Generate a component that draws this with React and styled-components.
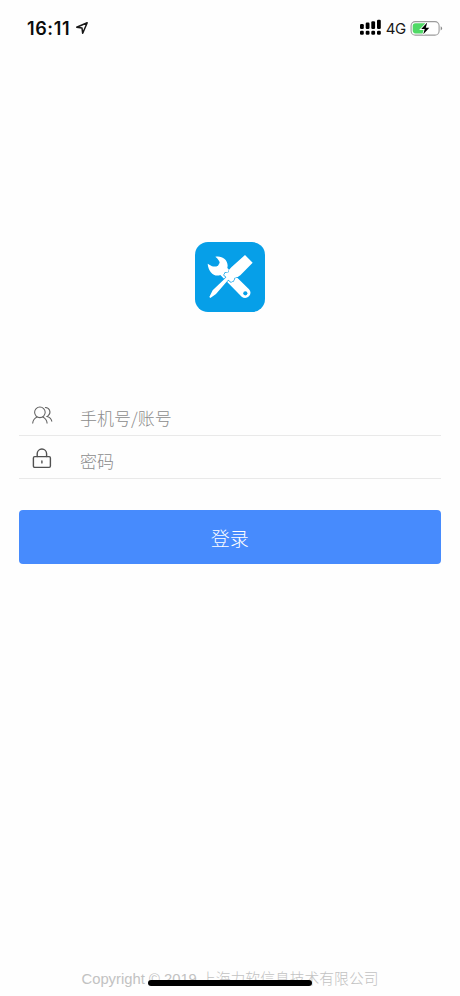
import React from "react";
import styled, { createGlobalStyle } from "styled-components";

const GlobalStyle = createGlobalStyle`
  * { box-sizing: border-box; }
  body { margin: 0; background: #fefefe; font-family: "Liberation Sans", "Noto Sans CJK SC", sans-serif; }
`;

const Screen = styled.main`
  width: 460px;
  height: 996px;
  display: flex;
  flex-direction: column;
  background: #fefefe;
  overflow: hidden;
`;

const StatusBar = styled.header`
  height: 56px;
  flex: none;
  display: flex;
  justify-content: space-between;
  padding: 0 17.5px 0 27px;
  align-items: center;
`;

const StatusGroup = styled.div`
  display: flex;
  align-items: center;
  gap: ${(p) => p.$gap}px;
`;

const Clock = styled.span`
  font: 600 18px/20px Inter, sans-serif;
  letter-spacing: 0.6px;
  padding-top: 1px;
  color: #0b0b0b;
`;

const Network = styled.span`
  font: 400 15px/20px Inter, sans-serif;
  letter-spacing: -0.3px;
  padding-top: 2px;
  color: #171717;
`;

const Icon = styled.svg`
  display: block;
  flex: none;
  overflow: visible;
`;

const Logo = styled.div`
  width: 70px;
  height: 70px;
  margin: 186px auto 0;
  border-radius: 13px;
  background: #069fe8;
  overflow: hidden;
  flex: none;
`;

const Form = styled.form`
  margin: 81px 19px 0 18.5px;
  display: flex;
  flex-direction: column;
`;

const Field = styled.label`
  height: 43px;
  display: flex;
  align-items: center;
  border-bottom: 1px solid #e9e9e9;
  padding-left: 12px;
  gap: 27.5px;
`;

const Input = styled.input`
  flex: 1;
  min-width: 0;
  height: 28px;
  margin-top: 8px;
  padding: 0;
  border: 0;
  outline: 0;
  background: transparent;
  font: 300 17px/28px "Noto Sans CJK SC", sans-serif;
  color: #333;
  &::placeholder { color: #8c8c8c; opacity: 1; }
`;

const Submit = styled.button`
  height: 54px;
  margin-top: 31.4px;
  padding: 2px 0 0;
  border: 0;
  border-radius: 4px;
  background: #478bfd;
  color: #fff;
  font: 300 19px/52px "Noto Sans CJK SC", sans-serif;
`;

const Footer = styled.footer`
  margin-top: auto;
  height: 29px;
  display: grid;
  justify-items: center;
  position: relative;
`;

const Copyright = styled.div`
  font: 300 14.8px/24px "Liberation Sans", "Noto Sans CJK SC", sans-serif;
  color: #c2c2c2;
  white-space: nowrap;
`;

const HomeIndicator = styled.div`
  position: absolute;
  top: 13px;
  left: 148px;
  width: 164px;
  height: 6px;
  border-radius: 3px;
  background: #000;
`;

const LocationIcon = () => (
  <Icon width="13" height="13" viewBox="-0.5 0.5 13 13">
    <path d="M1.2 5.7 11.7 1.2 7.2 11.8 6.5 6.5Z" fill="none" stroke="#171717" strokeWidth="1.5" strokeLinejoin="round" />
  </Icon>
);

const SignalIcon = () => (
  <Icon width="21" height="16" viewBox="0 0 21 16">
    {[0, 5.7, 11.3, 17].map((x, i) => (
      <g key={x}>
        <rect x={x} y={4 - i * 1.4} width="3.8" height={5 + i * 1.4} rx="1.2" />
        <rect x={x} y="10.8" width="3.8" height="4" rx="1.2" />
      </g>
    ))}
  </Icon>
);

const BatteryIcon = () => (
  <Icon width="32" height="15" viewBox="0.5 0 32 15">
    <rect x=".6" y=".6" width="28" height="13.5" rx="4.2" fill="#fff" stroke="#9b9b9b" strokeWidth="1.1" />
    <path d="M5 2.2h9.7v10.2H5a2.8 2.8 0 0 1-2.8-2.8V5A2.8 2.8 0 0 1 5 2.2Z" fill="#50d966" />
    <path d="M30.2 5.2q3 2.1 0 4.4Z" fill="#8c8c8c" />
    <path d="M16.7 1.6 10.7 8h3.5l-1.4 5.3 6-6.5h-3.5Z" stroke="#fff" strokeWidth="1.8" paintOrder="stroke" />
  </Icon>
);

const ToolsIcon = () => (
  <Icon width="70" height="70" viewBox="30 32 210 210">
    <path fill="#fff" d="M91 76C109 72 128 83 128 103L127 110 192 174Q201 184 192 195 181 205 170 196L106 131C87 138 70 121 68 97L81 105Q92 107 99 103L104 94Q103 86 91 76Z" />
    <circle cx="181" cy="186" r="6.2" fill="#069fe8" />
    <path fill="#fff" stroke="#069fe8" strokeWidth="4" paintOrder="stroke" strokeLinejoin="round" d="M180 71 203 94 166 132Q157 140 149 139L145 149 138 152 130 145 93 188 76 200 73 197 83 177 124 138 117 131 121 124 131 123Q131 114 139 108Z" />
  </Icon>
);

const UsersIcon = () => (
  <Icon width="22" height="22" viewBox="0 -1.5 22 22" fill="none" stroke="#626262" strokeWidth="1.05" strokeLinecap="round">
    <circle cx="8.9" cy="7.8" r="5.3" />
    <path d="M1.7 18.6c.3-3 1.8-4.9 4.3-6.1M11.8 12.5c2.5 1.2 4 3.1 4.3 6.1M14.4 3c4.5.2 6.1 5.4 2.8 8.1l-1.2.9c2.6.6 4.2 2.2 4.8 4.7" />
  </Icon>
);

const LockIcon = () => (
  <Icon width="22" height="22" viewBox="0.5 -1.2 22 22" fill="none" stroke="#515151" strokeWidth="1.4" strokeLinecap="round">
    <rect x="2.9" y="9.4" width="17" height="10.8" rx="1.3" />
    <path d="M6.7 9.4V6.5a4.7 4.7 0 0 1 9.4 0v2.9M11.4 13.7v2" />
  </Icon>
);

export default function App() {
  return (
    <Screen>
      <GlobalStyle />
      <StatusBar>
        <StatusGroup $gap={5}><Clock>16:11</Clock><LocationIcon /></StatusGroup>
        <StatusGroup $gap={4.5}><SignalIcon /><Network>4G</Network><BatteryIcon /></StatusGroup>
      </StatusBar>
      <Logo><ToolsIcon /></Logo>
      <Form>
        <Field><UsersIcon /><Input placeholder="手机号/账号" aria-label="手机号/账号" /></Field>
        <Field><LockIcon /><Input type="password" placeholder="密码" aria-label="密码" /></Field>
        <Submit type="button">登录</Submit>
      </Form>
      <Footer><Copyright>Copyright © 2019 上海力软信息技术有限公司</Copyright><HomeIndicator /></Footer>
    </Screen>
  );
}
